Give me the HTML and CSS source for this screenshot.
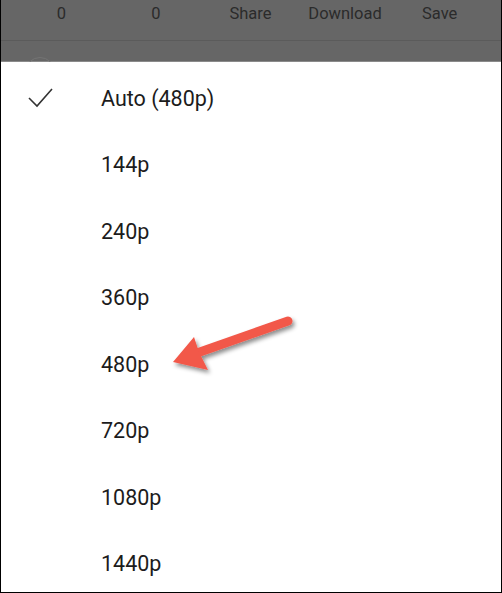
FILE: index.html
```html
<!DOCTYPE html>
<html lang="en">
<head>
    <meta charset="UTF-8">
    <meta name="viewport" content="width=device-width, initial-scale=1.0">
    <title>Video quality</title>
    <link rel="stylesheet" href="styles.css">
</head>
<body>
    <div class="frame">
        <!-- Dimmed video page behind the sheet -->
        <div class="backdrop">
            <div class="actions">
                <span>0</span>
                <span>0</span>
                <span>Share</span>
                <span>Download</span>
                <span>Save</span>
            </div>
            <div class="channel">
                <span class="avatar"></span>
                <span class="channel-name">Online Tech Tips</span>
            </div>
        </div>

        <!-- Quality picker -->
        <div class="sheet">
            <ul class="quality-list">
                <li class="selected">
                    <span class="check">
                        <svg width="26" height="20" viewBox="0 0 26 20">
                            <polyline points="2,10 10,18 25,1" fill="none" stroke="#333" stroke-width="1.6"/>
                        </svg>
                    </span>
                    <span>Auto (480p)</span>
                </li>
                <li><span class="check"></span><span>144p</span></li>
                <li><span class="check"></span><span>240p</span></li>
                <li><span class="check"></span><span>360p</span></li>
                <li><span class="check"></span><span>480p</span></li>
                <li><span class="check"></span><span>720p</span></li>
                <li><span class="check"></span><span>1080p</span></li>
                <li><span class="check"></span><span>1440p</span></li>
            </ul>
        </div>

        <!-- Red callout arrow -->
        <svg class="callout" width="502" height="593" viewBox="0 0 502 593">
            <defs>
                <filter id="shadow" x="-20%" y="-40%" width="140%" height="180%">
                    <feDropShadow dx="2" dy="3" stdDeviation="2" flood-color="#000" flood-opacity="0.45"/>
                </filter>
            </defs>
            <g filter="url(#shadow)">
                <line x1="287" y1="321" x2="196" y2="353" stroke="#f2584a" stroke-width="9" stroke-linecap="round"/>
                <polygon points="172,362 193,337 198,352 207,370" fill="#f2584a"/>
            </g>
        </svg>
    </div>
</body>
</html>
```

FILE: styles.css
```css
/* Page */
body {
    margin: 0;
    font-family: Roboto, "Noto Sans", Arial, sans-serif;
    background-color: #fff;
}

.frame {
    position: relative;
    width: 502px;
    height: 593px;
    box-sizing: border-box;
    border: 1px solid #000;
    border-top: none;
    overflow: hidden;
    background-color: #fff;
}

/* Dimmed page behind the sheet */
.backdrop {
    height: 62px;
    background-color: #666;
    overflow: hidden;
}

.actions {
    display: grid;
    grid-template-columns: repeat(5, 1fr);
    padding: 0 14px 0 13px;
    height: 40px;
    border-bottom: 1px solid #5b5b5b;
    color: #2b2b2b;
    font-size: 16.5px;
    line-height: 28px;
    text-align: center;
}

.channel {
    display: flex;
    align-items: flex-start;
    padding: 16px 0 0 24px;
}

.avatar {
    width: 30px;
    height: 30px;
    border-radius: 50%;
    border: 1px solid #747474;
    box-sizing: border-box;
}

.channel-name {
    margin-left: 27px;
    margin-top: 1px;
    font-size: 20px;
    font-weight: 500;
    color: #2a2a2a;
}

/* Quality sheet */
.sheet {
    background-color: #fff;
    padding-top: 3px;
    border-top: 1px solid #8a8a8a;
    margin-top: -1px;
}

.quality-list {
    list-style: none;
    margin: 0;
    padding: 0;
}

.quality-list li {
    display: flex;
    align-items: center;
    height: 66.5px;
    font-size: 21.5px;
    color: #1c1c1c;
}

.check {
    display: flex;
    align-items: center;
    width: 100px;
    padding-left: 26px;
    box-sizing: border-box;
}

.check svg {
    display: block;
}

/* Callout overlay */
.callout {
    position: absolute;
    top: 0;
    left: 0;
    pointer-events: none;
}
```
